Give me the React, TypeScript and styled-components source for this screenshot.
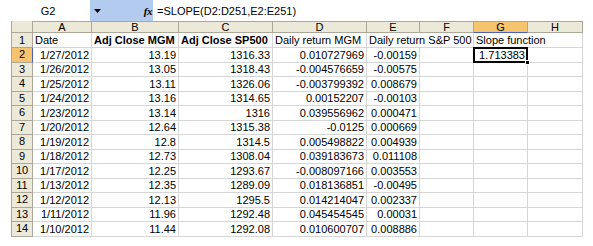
import React from 'react';
import styled, { createGlobalStyle } from 'styled-components';

type Align = 'left' | 'right' | 'center';

const GlobalStyle = createGlobalStyle`
  html, body {
    margin: 0;
    padding: 0;
    background: #ffffff;
  }
  body {
    font-family: 'Liberation Sans', Arial, sans-serif;
    font-size: 11px;
    color: #000000;
  }
`;

const Page = styled.div`
  width: 593px;
  height: 246px;
  overflow: hidden;
  background: #ffffff;
`;

const FormulaBar = styled.div`
  display: flex;
  align-items: stretch;
  height: 21px;
`;

const NameBox = styled.div`
  width: 90px;
  box-sizing: border-box;
  padding-left: 6px;
  display: flex;
  align-items: center;
  justify-content: center;
`;

const FxButton = styled.div`
  width: 63px;
  box-sizing: border-box;
  padding: 0 1px 0 4px;
  display: flex;
  align-items: center;
  justify-content: space-between;
  background: #b4cbf0;
`;

const FxLabel = styled.span`
  font-family: 'Liberation Serif', 'Times New Roman', serif;
  font-style: italic;
  font-weight: bold;
  font-size: 11px;
  letter-spacing: -0.5px;
`;

const FormulaText = styled.div`
  display: flex;
  align-items: center;
  padding-left: 4px;
`;

const Sheet = styled.div`
  margin-left: 11px;
  display: grid;
  grid-template-columns: 22px 59px 87px 94px 94px 53px 54px 54px 55px;
  grid-template-rows: 12px 15px repeat(13, 14.5px);
  width: max-content;
`;

const Header = styled.div<{ $active?: boolean; $side?: boolean }>`
  box-sizing: border-box;
  display: flex;
  align-items: center;
  justify-content: center;
  line-height: 1;
  background: ${({ $active }) => ($active ? '#f6c46e' : '#ece9d8')};
  border-right: 1px solid ${({ $active, $side }) => ($active && $side ? '#4b5fc0' : '#aca899')};
  border-bottom: 1px solid ${({ $active, $side }) => ($active && !$side ? '#4b5fc0' : '#aca899')};
  border-left: ${({ $side }) => ($side ? '1px solid #aca899' : '0')};
  border-top: ${({ $side }) => ($side ? '0' : '1px solid #aca899')};
`;

const Cell = styled.div<{ $align?: Align; $bold?: boolean; $span?: number; $selected?: boolean }>`
  box-sizing: border-box;
  position: relative;
  display: flex;
  align-items: flex-end;
  justify-content: ${({ $align }) =>
    $align === 'right' ? 'flex-end' : $align === 'center' ? 'center' : 'flex-start'};
  grid-column: span ${({ $span }) => $span || 1};
  padding: 0 2px 1px 2px;
  line-height: 12px;
  white-space: nowrap;
  font-weight: ${({ $bold }) => ($bold ? 'bold' : 'normal')};
  border-right: 1px solid #d6d6d6;
  border-bottom: 1px solid #d6d6d6;

  ${({ $selected }) =>
    $selected &&
    `
    &::after {
      content: '';
      position: absolute;
      left: -1px;
      top: -1px;
      right: -1px;
      bottom: -1px;
      border: 2px solid #000;
    }
    &::before {
      content: '';
      position: absolute;
      right: -3px;
      bottom: -3px;
      width: 5px;
      height: 5px;
      background: #000;
      border: 1px solid #fff;
      box-sizing: border-box;
      z-index: 2;
    }
  `}
`;

const columns = ['A', 'B', 'C', 'D', 'E', 'F', 'G', 'H'];

const data = [
  ['1/27/2012', '13.19', '1316.33', '0.010727969', '-0.00159'],
  ['1/26/2012', '13.05', '1318.43', '-0.004576659', '-0.00575'],
  ['1/25/2012', '13.11', '1326.06', '-0.003799392', '0.008679'],
  ['1/24/2012', '13.16', '1314.65', '0.00152207', '-0.00103'],
  ['1/23/2012', '13.14', '1316', '0.039556962', '0.000471'],
  ['1/20/2012', '12.64', '1315.38', '-0.0125', '0.000669'],
  ['1/19/2012', '12.8', '1314.5', '0.005498822', '0.004939'],
  ['1/18/2012', '12.73', '1308.04', '0.039183673', '0.011108'],
  ['1/17/2012', '12.25', '1293.67', '-0.008097166', '0.003553'],
  ['1/13/2012', '12.35', '1289.09', '0.018136851', '-0.00495'],
  ['1/12/2012', '12.13', '1295.5', '0.014214047', '0.002337'],
  ['1/11/2012', '11.96', '1292.48', '0.045454545', '0.00031'],
  ['1/10/2012', '11.44', '1292.08', '0.010600707', '0.008886']
];

const DropArrow = () => (
  <svg width="7" height="4" viewBox="0 0 7 4">
    <path d="M0 0 H7 L3.5 4 Z" fill="#000" />
  </svg>
);

const App: React.FunctionComponent = () => {
  return (
    <Page>
      <GlobalStyle />
      <FormulaBar>
        <NameBox>G2</NameBox>
        <FxButton>
          <DropArrow />
          <FxLabel>fx</FxLabel>
        </FxButton>
        <FormulaText>=SLOPE(D2:D251,E2:E251)</FormulaText>
      </FormulaBar>

      <Sheet>
        <Header $side />
        {columns.map(col => (
          <Header key={col} $active={col === 'G'}>
            {col}
          </Header>
        ))}

        <Header $side>1</Header>
        <Cell>Date</Cell>
        <Cell $bold>Adj Close MGM</Cell>
        <Cell $bold>Adj Close SP500</Cell>
        <Cell>Daily return MGM</Cell>
        <Cell $span={2}>Daily return S&amp;P 500</Cell>
        <Cell $span={2}>Slope function</Cell>

        {data.map((row, i) => {
          const rowNum = i + 2;
          return (
            <React.Fragment key={rowNum}>
              <Header $side $active={rowNum === 2}>
                {rowNum}
              </Header>
              {row.map((value, j) => (
                <Cell key={j} $align="right">
                  {value}
                </Cell>
              ))}
              <Cell />
              <Cell $align="right" $selected={rowNum === 2}>
                {rowNum === 2 ? '1.713383' : ''}
              </Cell>
              <Cell />
            </React.Fragment>
          );
        })}
      </Sheet>
    </Page>
  );
};

export default App;
